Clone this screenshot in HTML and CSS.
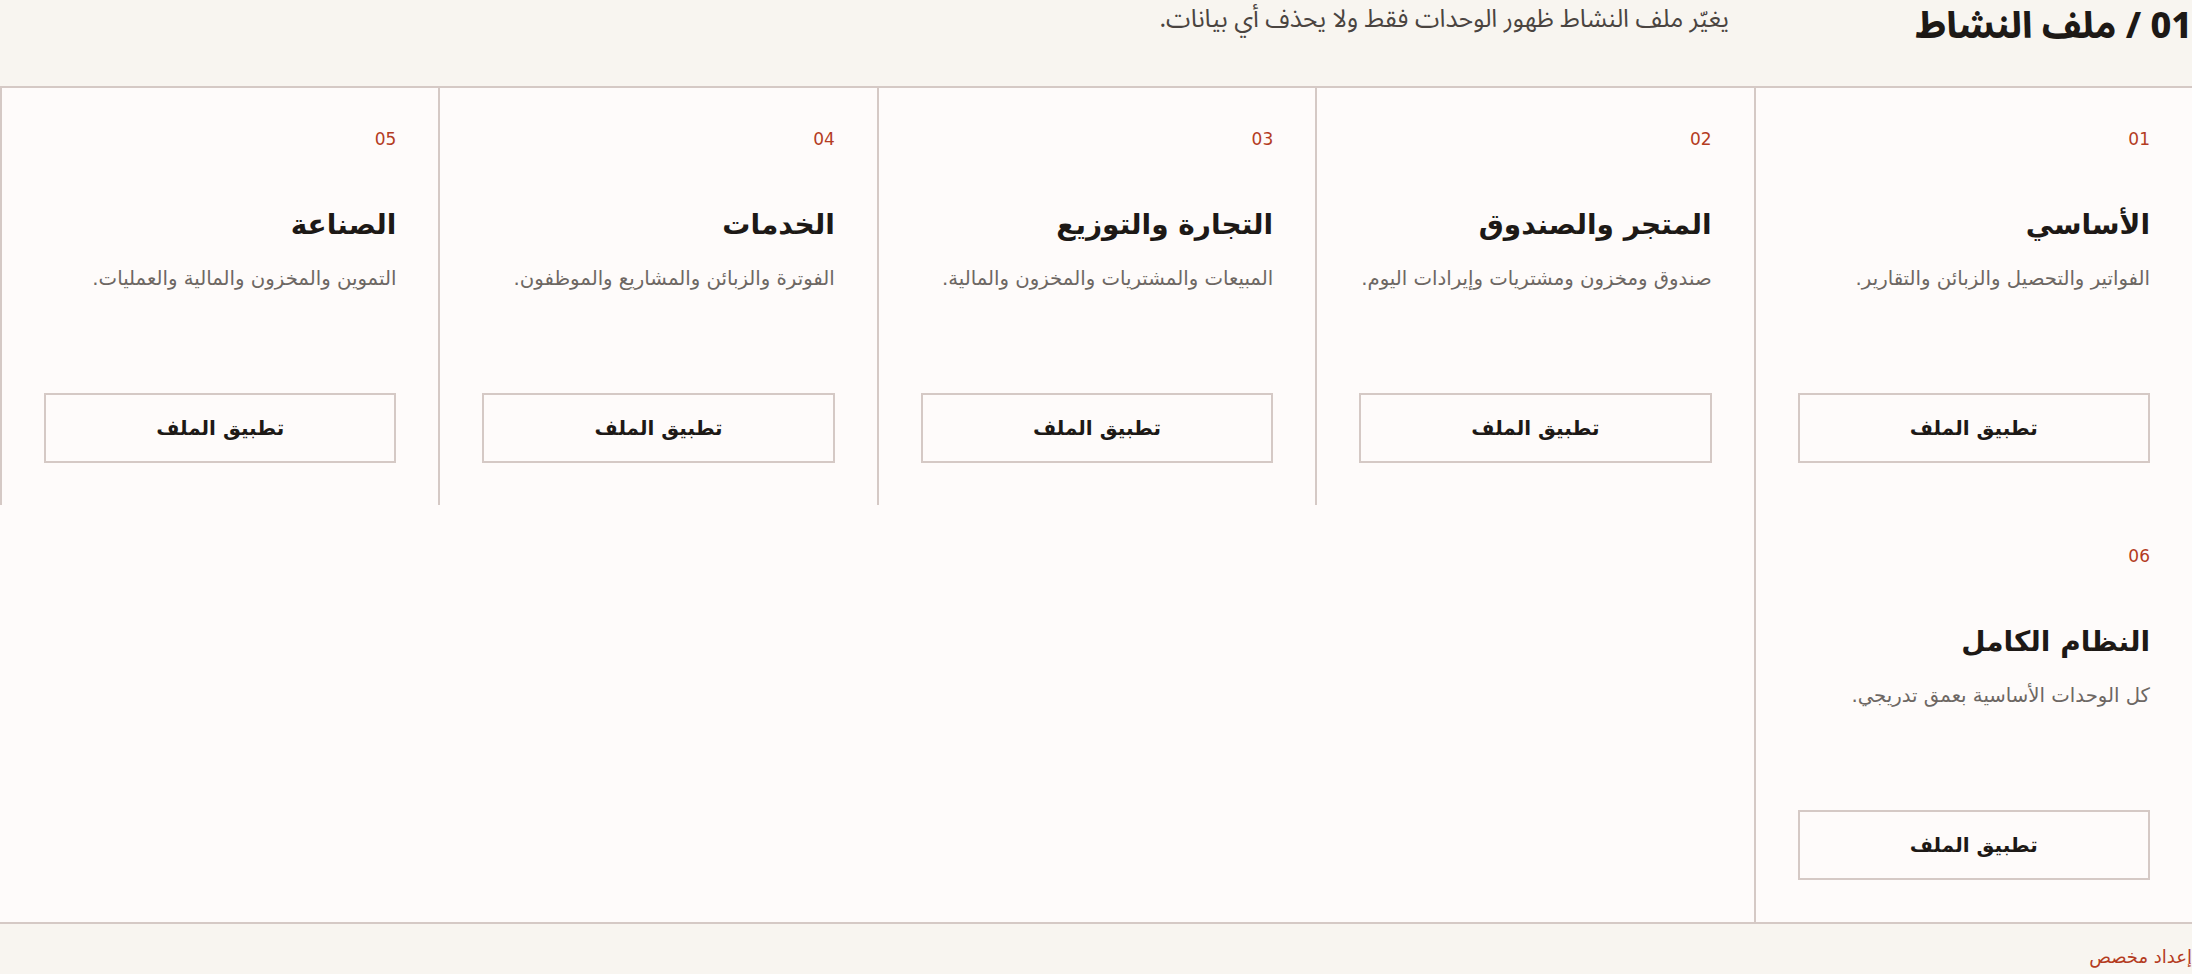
FILE: index.html
```html
<!DOCTYPE html>
<html lang="ar" dir="rtl">
<head>
<meta charset="utf-8">
<title>ملف النشاط</title>
<link rel="stylesheet" href="styles.css">
</head>
<body>
<main class="page">
  <header class="head">
    <h1 class="head-title">01 / ملف النشاط</h1>
    <p class="head-sub">يغيّر ملف النشاط ظهور الوحدات فقط ولا يحذف أي بيانات.</p>
  </header>
  <section class="grid">
    <article class="card">
      <span class="card-num">01</span>
      <h2 class="card-title">الأساسي</h2>
      <p class="card-desc">الفواتير والتحصيل والزبائن والتقارير.</p>
      <button class="card-btn" type="button">تطبيق الملف</button>
    </article>
    <article class="card">
      <span class="card-num">02</span>
      <h2 class="card-title">المتجر والصندوق</h2>
      <p class="card-desc">صندوق ومخزون ومشتريات وإيرادات اليوم.</p>
      <button class="card-btn" type="button">تطبيق الملف</button>
    </article>
    <article class="card">
      <span class="card-num">03</span>
      <h2 class="card-title">التجارة والتوزيع</h2>
      <p class="card-desc">المبيعات والمشتريات والمخزون والمالية.</p>
      <button class="card-btn" type="button">تطبيق الملف</button>
    </article>
    <article class="card">
      <span class="card-num">04</span>
      <h2 class="card-title">الخدمات</h2>
      <p class="card-desc">الفوترة والزبائن والمشاريع والموظفون.</p>
      <button class="card-btn" type="button">تطبيق الملف</button>
    </article>
    <article class="card">
      <span class="card-num">05</span>
      <h2 class="card-title">الصناعة</h2>
      <p class="card-desc">التموين والمخزون والمالية والعمليات.</p>
      <button class="card-btn" type="button">تطبيق الملف</button>
    </article>
    <article class="card">
      <span class="card-num">06</span>
      <h2 class="card-title">النظام الكامل</h2>
      <p class="card-desc">كل الوحدات الأساسية بعمق تدريجي.</p>
      <button class="card-btn" type="button">تطبيق الملف</button>
    </article>
  </section>
  <footer class="foot">
    <a class="foot-link" href="#">إعداد مخصص</a>
  </footer>
</main>
</body>
</html>
```
FILE: styles.css
```css
html, body {
  margin: 0;
  padding: 0;
  background: #f8f5f0;
}
body {
  font-family: "DejaVu Sans", sans-serif;
  color: #1d1916;
}
.page {
  display: flex;
  flex-direction: column;
}
.head {
  display: grid;
  grid-template-columns: 463px 1fr;
  align-items: start;
  height: 86px;
  background: #f8f5f0;
  font-family: "Noto Sans", "Noto Sans Arabic", "Noto Sans Arabic UI", "Noto Kufi Arabic", sans-serif;
}
.head-title {
  margin: 0;
  font-size: 36px;
  font-weight: 800;
  line-height: 50px;
  color: #1d1916;
  white-space: nowrap;
}
.head-sub {
  margin: 0;
  font-size: 24.8px;
  line-height: 35px;
  color: #4a4440;
}
.grid {
  display: grid;
  grid-template-columns: repeat(5, 1fr);
  background: #fefbfa;
  border-top: 2px solid #d5c9c5;
  border-bottom: 2px solid #d5c9c5;
}
.card {
  display: flex;
  flex-direction: column;
  align-items: stretch;
  min-height: 334px;
  padding: 41px 42px 42px;
  border-left: 2px solid #d5c9c5;
}
.card-num {
  font-size: 17px;
  line-height: 20px;
  color: #b43c1f;
}
.card-title {
  margin: 58px 0 0;
  font-size: 28px;
  line-height: 36px;
  font-weight: 700;
  color: #1d1916;
}
.card-desc {
  margin: 21px 0 0;
  font-size: 19.7px;
  line-height: 30px;
  color: #6d6763;
  white-space: nowrap;
}
.card-btn {
  margin-top: auto;
  height: 70px;
  border: 2px solid #d5c9c5;
  background: transparent;
  font-family: "DejaVu Sans", sans-serif;
  font-size: 20px;
  font-weight: 700;
  color: #1d1916;
  cursor: pointer;
}
.foot {
  display: flex;
  padding: 21px 0 0;
  background: #f8f5f0;
  height: 31px;
}
.foot-link {
  font-size: 18px;
  line-height: 24px;
  color: #b43c1f;
  text-decoration: none;
}
```
